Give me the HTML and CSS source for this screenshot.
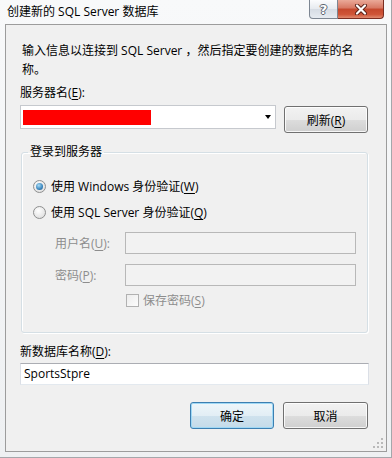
FILE: index.html
```html
<!DOCTYPE html>
<html lang="zh-CN">
<head>
  <meta charset="UTF-8">
  <title>创建新的 SQL Server 数据库</title>
  <link rel="stylesheet" href="styles.css">
</head>
<body>
  <div class="window">
    <div class="titlebar">
      <span class="title">创建新的 SQL Server 数据库</span>
      <div class="caption">
        <span class="cap-help">?</span>
        <span class="cap-close">
          <svg width="14" height="11" viewBox="0 0 14 11">
            <path d="M3 1.5 L11 9.5 M11 1.5 L3 9.5" stroke="#5b2016" stroke-width="4" stroke-linecap="round"/>
            <path d="M3 1.5 L11 9.5 M11 1.5 L3 9.5" stroke="#fff" stroke-width="2.2" stroke-linecap="round"/>
          </svg>
        </span>
      </div>
    </div>

    <div class="client">
      <p class="intro">输入信息以连接到 SQL Server ，然后指定要创建的数据库的名<br>称。</p>

      <label class="field-label">服务器名(<u>E</u>):</label>
      <div class="server-row">
        <div class="combo">
          <span class="redact"></span>
          <span class="arrow"></span>
        </div>
        <button class="btn">刷新(<u>R</u>)</button>
      </div>

      <fieldset class="group">
        <legend>登录到服务器</legend>
        <div class="group-body">
          <div class="radio-row">
            <span class="radio on"></span>
            <span>使用 Windows 身份验证(<u>W</u>)</span>
          </div>
          <div class="radio-row second">
            <span class="radio"></span>
            <span>使用 SQL Server 身份验证(<u>Q</u>)</span>
          </div>
          <div class="cred-grid">
            <span class="cred-label">用户名(<u>U</u>):</span>
            <span class="textbox disabled"></span>
            <span class="cred-label">密码(<u>P</u>):</span>
            <span class="textbox disabled"></span>
          </div>
          <div class="check-row">
            <span class="checkbox"></span>
            <span>保存密码(<u>S</u>)</span>
          </div>
        </div>
      </fieldset>

      <label class="field-label db-label">新数据库名称(<u>D</u>):</label>
      <div class="textbox db-name">SportsStpre</div>

      <div class="actions">
        <button class="btn default">确定</button>
        <button class="btn cancel">取消</button>
      </div>

      <svg class="grip" width="11" height="11" viewBox="0 0 11 11">
        <rect x="8" y="0" width="2" height="2" fill="#b9b9b9"/>
        <rect x="4" y="4" width="2" height="2" fill="#b9b9b9"/>
        <rect x="8" y="4" width="2" height="2" fill="#b9b9b9"/>
        <rect x="0" y="8" width="2" height="2" fill="#b9b9b9"/>
        <rect x="4" y="8" width="2" height="2" fill="#b9b9b9"/>
        <rect x="8" y="8" width="2" height="2" fill="#b9b9b9"/>
      </svg>
    </div>
  </div>
</body>
</html>
```
FILE: styles.css
```css
* {
  box-sizing: border-box;
}
body {
  margin: 0;
  font-family: "Open Sans", "Noto Sans CJK SC", sans-serif;
  font-size: 12px;
  color: #000;
  background: #fff;
}
u {
  text-decoration-thickness: 1px;
  text-underline-offset: 2px;
}
.window {
  width: 392px;
  height: 458px;
  background: linear-gradient(#f8f9fa, #eef0f2);
  border-right: 1px solid #a4a7ab;
  border-bottom: 1px solid #a4a7ab;
}
.titlebar {
  height: 24px;
  display: flex;
  justify-content: space-between;
  align-items: flex-start;
  padding: 0 7px 0 7px;
}
.title {
  padding-top: 3px;
  line-height: 18px;
}
.caption {
  display: flex;
}
.cap-help {
  width: 29px;
  height: 19px;
  border: 1px solid #7d8692;
  border-top: 0;
  border-radius: 0 0 0 4px;
  background: linear-gradient(#fbfcfd, #e6eaef 50%, #d6dce4 51%, #e6ebf1);
  display: flex;
  align-items: center;
  justify-content: center;
  font: bold 13px "DejaVu Sans", sans-serif;
  color: #fff;
  text-shadow: 1px 0 0 #5c6470, -1px 0 0 #5c6470, 0 1px 0 #5c6470, 0 -1px 0 #5c6470;
}
.cap-close {
  width: 46px;
  height: 19px;
  border: 1px solid #7b2d21;
  border-top: 0;
  border-left: 0;
  border-radius: 0 0 4px 0;
  background: linear-gradient(#eaa998, #d77762 45%, #c5482d 50%, #cf5538 80%, #e08a6f);
  display: flex;
  align-items: center;
  justify-content: center;
}
.client {
  position: relative;
  width: 382px;
  height: 428px;
  margin-left: 5px;
  border: 1px solid #9c9c9c;
  background: #f0f0f0;
  padding: 16px 17px 0 14px;
}
.intro {
  margin: 0;
  padding-left: 2px;
  line-height: 19px;
  white-space: nowrap;
}
.field-label {
  display: block;
  margin-top: 5px;
  line-height: 18px;
}
.server-row {
  display: flex;
  justify-content: space-between;
  align-items: flex-start;
  margin-top: 3px;
  padding-right: 1px;
}
.combo {
  width: 256px;
  height: 24px;
  border: 1px solid #c6c9ce;
  background: #fff;
  display: flex;
  align-items: center;
  padding-left: 2px;
}
.redact {
  width: 128px;
  height: 15px;
  background: #ff0000;
}
.arrow {
  margin-left: auto;
  margin-right: 4px;
  border-top: 4px solid #000;
  border-left: 3.5px solid transparent;
  border-right: 3.5px solid transparent;
}
.btn {
  width: 84px;
  height: 27px;
  margin-top: 1px;
  border: 1px solid #707070;
  border-radius: 3px;
  background: linear-gradient(#f2f2f2, #ebebeb 50%, #dddddd 51%, #cfcfcf);
  box-shadow: inset 0 0 0 1px rgba(255, 255, 255, 0.8);
  font: inherit;
  color: #000;
  padding: 0;
}
.btn.default {
  border-color: #3c7fb1;
  background: linear-gradient(#eef6fa, #e2eef5 50%, #cfe2ee 51%, #c4dbe9);
  box-shadow: inset 0 0 0 1px #9fd8f5;
  margin-top: 0;
}
.btn.cancel {
  width: 85px;
  margin-top: 0;
}
.group {
  margin: 10px 1px 0 1px;
  padding: 0;
  min-width: 0;
  border: 1px solid #d5dfe5;
  border-radius: 3px;
  box-shadow: inset 1px 1px 0 #fff, 1px 1px 0 #fff;
}
.group legend {
  margin-left: 6px;
  padding: 0 2px;
  line-height: 18px;
}
.group-body {
  display: flex;
  flex-direction: column;
  padding: 15px 12px 23px 11px;
}
.radio-row {
  display: flex;
  align-items: center;
  gap: 5px;
  height: 20px;
}
.radio-row.second {
  margin-top: 6px;
}
.radio {
  width: 13px;
  height: 13px;
  border-radius: 50%;
  border: 1px solid #8e8f8f;
  background: radial-gradient(circle at 40% 35%, #ffffff, #d8d8d8);
  display: flex;
  align-items: center;
  justify-content: center;
}
.radio.on::after {
  content: "";
  width: 7px;
  height: 7px;
  border-radius: 50%;
  background: radial-gradient(circle at 40% 35%, #a9dcf6, #3a86bd 60%, #1d4f80);
}
.cred-grid {
  display: grid;
  grid-template-columns: 92px 231px;
  row-gap: 10px;
  align-items: center;
  margin-top: 10px;
}
.cred-label {
  padding-left: 22px;
  color: #8d8d8d;
}
.textbox {
  display: block;
  height: 22px;
  border: 1px solid #abadb3;
  border-left-color: #dbdfe6;
  border-right-color: #dbdfe6;
  border-bottom-color: #e3e9ef;
  background: #fff;
}
.textbox.disabled {
  border-color: #b8b8b8;
  background: #f2f2f2;
}
.check-row {
  display: flex;
  align-items: center;
  gap: 4px;
  height: 18px;
  margin-top: 5px;
  margin-left: 93px;
  color: #8d8d8d;
}
.checkbox {
  width: 13px;
  height: 13px;
  border: 1px solid #b1b1b1;
  background: linear-gradient(135deg, #ececec, #fcfcfc);
}
.db-label {
  margin-top: 10px;
}
.db-name {
  margin-top: 2px;
  padding-left: 3px;
  line-height: 20px;
}
.actions {
  display: flex;
  justify-content: flex-end;
  gap: 9px;
  margin-top: 17px;
  padding-right: 1px;
}
.grip {
  position: absolute;
  right: 2px;
  bottom: 2px;
}
```
